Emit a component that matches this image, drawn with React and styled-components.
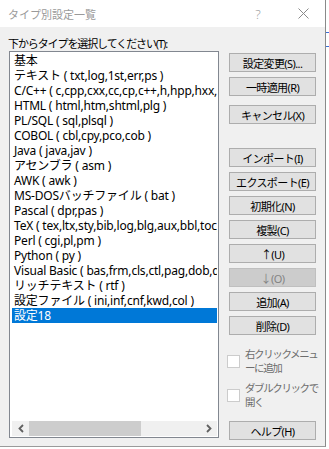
import React from "react";
import styled, { createGlobalStyle } from "styled-components";

const GlobalStyle = createGlobalStyle`
  body {
    margin: 0;
    background: #ffffff;
    font-family: "Noto Sans", "Noto Sans CJK JP", sans-serif;
  }
`;

const Screen = styled.div`
  display: flex;
  width: 329px;
  height: 449px;
  overflow: hidden;
`;

const Window = styled.div`
  width: 326px;
  height: 447px;
  flex-shrink: 0;
  box-sizing: border-box;
  border-right: 1px solid #8a8a8a;
  border-bottom: 1px solid #9a9a9a;
  background: #f0f0f0;
  display: flex;
  flex-direction: column;
`;

const Edge = styled.div`
  flex: 1;
  display: flex;
  flex-direction: column;
  padding-top: 32px;
  gap: 11px;
`;

const Dash = styled.div`
  width: 3px;
  height: 2px;
  border-top: 1px solid #3b6fd6;
`;

const TitleBar = styled.div`
  height: 27px;
  flex-shrink: 0;
  background: #ffffff;
  display: flex;
  align-items: center;
  padding-left: 8px;
  padding-right: 10px;
  font-size: 11px;
  color: #9a9a9a;
`;

const Title = styled.span`
  flex: 1;
`;

const TitleButton = styled.span`
  width: ${(p) => p.w}px;
  margin-right: ${(p) => p.mr || 0}px;
  display: flex;
  justify-content: center;
  color: #a0a0a0;
  font-size: 13px;
  font-weight: 300;
`;

const Body = styled.div`
  flex: 1;
  min-height: 0;
  overflow: hidden;
  display: flex;
  padding: 10px 0 0 8px;
`;

const LeftColumn = styled.div`
  display: flex;
  flex-direction: column;
  width: 211px;
  flex-shrink: 0;
`;

const Label = styled.div`
  font-size: 11px;
  line-height: 14px;
  height: 14px;
  letter-spacing: -1.1px;
  white-space: nowrap;
  color: #000;
`;

const ListBox = styled.div`
  margin: 0 0 0 1px;
  width: 210px;
  height: 387px;
  flex-shrink: 0;
  box-sizing: border-box;
  border: 1px solid #828790;
  background: #fff;
  padding: 1px;
  display: flex;
  flex-direction: column;
`;

const Items = styled.div`
  flex: 1;
  min-height: 0;
  overflow: hidden;
  padding-left: 1px;
`;

const Item = styled.div`
  height: 15px;
  line-height: 15px;
  font-size: 12px;
  letter-spacing: -0.2px;
  white-space: nowrap;
  overflow: hidden;
  padding-left: 2px;
  color: ${(p) => (p.selected ? "#fff" : "#000")};
  background: ${(p) => (p.selected ? "#0078d7" : "transparent")};
`;

const HScroll = styled.div`
  height: 15px;
  flex-shrink: 0;
  background: #f0f0f0;
  display: flex;
  align-items: center;
  margin-left: 1px;
`;

const Arrow = styled.div`
  width: 17px;
  display: flex;
  justify-content: center;
  align-items: center;
`;

const Track = styled.div`
  flex: 1;
  height: 15px;
`;

const Thumb = styled.div`
  width: 112px;
  height: 15px;
  background: #cdcdcd;
`;

const RightColumn = styled.div`
  display: flex;
  flex-direction: column;
  width: 87px;
  flex-shrink: 0;
  margin-left: 10px;
  padding-top: 16px;
`;

const Button = styled.div`
  height: 19px;
  flex-shrink: 0;
  box-sizing: border-box;
  margin-top: ${(p) => p.mt ?? 5}px;
  border: 1px solid ${(p) => (p.disabled ? "#bfbfbf" : "#adadad")};
  background: ${(p) => (p.disabled ? "#cccccc" : "#e1e1e1")};
  color: ${(p) => (p.disabled ? "#838383" : "#000")};
  display: flex;
  align-items: center;
  justify-content: center;
  font-size: 11px;
  letter-spacing: -0.6px;
  white-space: nowrap;
`;

const CheckRow = styled.label`
  display: flex;
  align-items: center;
  height: 28px;
  flex-shrink: 0;
  margin-top: ${(p) => p.mt}px;
  margin-left: -2px;
`;

const Box = styled.span`
  width: 13px;
  height: 13px;
  box-sizing: border-box;
  border: 1px solid #cccccc;
  background: #fff;
  flex-shrink: 0;
`;

const CheckText = styled.span`
  margin-left: 5px;
  font-size: 10.5px;
  line-height: 14px;
  color: #6d6d6d;
  letter-spacing: -1.4px;
  white-space: nowrap;
`;

const types = [
  "基本",
  "テキスト ( txt,log,1st,err,ps )",
  "C/C++ ( c,cpp,cxx,cc,cp,c++,h,hpp,hxx,hh,inl )",
  "HTML ( html,htm,shtml,plg )",
  "PL/SQL ( sql,plsql )",
  "COBOL ( cbl,cpy,pco,cob )",
  "Java ( java,jav )",
  "アセンブラ ( asm )",
  "AWK ( awk )",
  "MS-DOSバッチファイル ( bat )",
  "Pascal ( dpr,pas )",
  "TeX ( tex,ltx,sty,bib,log,blg,aux,bbl,toc,lof,lot,idx,ind,glo )",
  "Perl ( cgi,pl,pm )",
  "Python ( py )",
  "Visual Basic ( bas,frm,cls,ctl,pag,dob,dsr,vb )",
  "リッチテキスト ( rtf )",
  "設定ファイル ( ini,inf,cnf,kwd,col )",
  "設定18",
];

const Chevron = ({ dir }) => (
  <svg width="8" height="9" viewBox="0 0 8 9">
    <path
      d={dir === "left" ? "M6 1 L2.5 4.5 L6 8" : "M2 1 L5.5 4.5 L2 8"}
      fill="none"
      stroke="#606060"
      strokeWidth="1.8"
    />
  </svg>
);

const App = () => {
  return (
    <Screen>
      <GlobalStyle />
      <Window>
        <TitleBar>
          <Title>タイプ別設定一覧</Title>
          <TitleButton w={24} mr={22}>?</TitleButton>
          <TitleButton w={23}>
            <svg width="11" height="11" viewBox="0 0 11 11">
              <path d="M0.5 0.5 L10.5 10.5 M10.5 0.5 L0.5 10.5" stroke="#8a8a8a" strokeWidth="1" />
            </svg>
          </TitleButton>
        </TitleBar>
        <Body>
          <LeftColumn>
            <Label>下からタイプを選択してください(T):</Label>
            <ListBox>
              <Items>
                {types.map((t, i) => (
                  <Item key={i} selected={i === types.length - 1}>
                    {t}
                  </Item>
                ))}
              </Items>
              <HScroll>
                <Arrow>
                  <Chevron dir="left" />
                </Arrow>
                <Track>
                  <Thumb />
                </Track>
                <Arrow>
                  <Chevron dir="right" />
                </Arrow>
              </HScroll>
            </ListBox>
          </LeftColumn>
          <RightColumn>
            <Button mt={0}>設定変更(S)...</Button>
            <Button>一時適用(R)</Button>
            <Button mt={9}>キャンセル(X)</Button>
            <Button mt={24}>インポート(I)</Button>
            <Button>エクスポート(E)</Button>
            <Button>初期化(N)</Button>
            <Button>複製(C)</Button>
            <Button>↑(U)</Button>
            <Button disabled>↓(O)</Button>
            <Button>追加(A)</Button>
            <Button>削除(D)</Button>
            <CheckRow mt={12}>
              <Box />
              <CheckText>
                右クリックメニュ
                <br />
                ーに追加
              </CheckText>
            </CheckRow>
            <CheckRow mt={6}>
              <Box />
              <CheckText>
                ダブルクリックで
                <br />
                開く
              </CheckText>
            </CheckRow>
            <Button mt={12}>ヘルプ(H)</Button>
          </RightColumn>
        </Body>
      </Window>
      <Edge>
        <Dash />
        <Dash />
      </Edge>
    </Screen>
  );
};

export default App;
